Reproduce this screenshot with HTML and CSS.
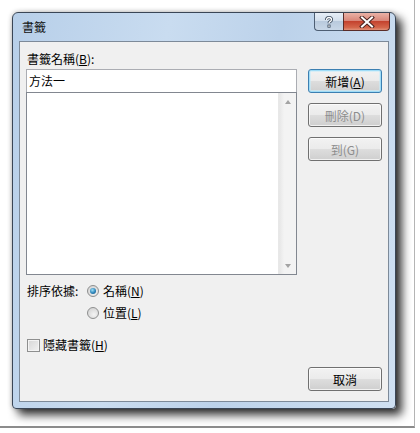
FILE: index.html
```html
<!DOCTYPE html>
<html lang="zh-Hant">
<head>
    <meta charset="UTF-8">
    <meta name="viewport" content="width=device-width, initial-scale=1.0">
    <title>書籤</title>
    <link rel="stylesheet" href="styles.css">
</head>
<body>
    <div class="shot">
        <div class="window">
            <div class="titlebar">
                <span class="title">書籤</span>
                <div class="caption-btns">
                    <div class="cap-btn help">
                        <svg width="12" height="12" viewBox="0 0 12 12">
                            <path d="M3.5 4 Q3.5 1.5 6 1.5 Q8.5 1.5 8.5 3.7 Q8.5 5 6.8 5.8 Q6 6.2 6 7.3" fill="none" stroke="#3b4a5c" stroke-width="3"/>
                            <path d="M3.5 4 Q3.5 1.5 6 1.5 Q8.5 1.5 8.5 3.7 Q8.5 5 6.8 5.8 Q6 6.2 6 7.3" fill="none" stroke="#fff" stroke-width="1.3"/>
                            <rect x="4.5" y="8.6" width="3" height="3" fill="#3b4a5c"/>
                            <rect x="5.3" y="9.4" width="1.4" height="1.4" fill="#fff"/>
                        </svg>
                    </div>
                    <div class="cap-btn close">
                        <svg width="16" height="12" viewBox="0 0 16 12">
                            <path d="M3 1.5 L13 10.5 M13 1.5 L3 10.5" stroke="#4a2420" stroke-width="4" stroke-linecap="square"/>
                            <path d="M3 1.5 L13 10.5 M13 1.5 L3 10.5" stroke="#fff" stroke-width="2" stroke-linecap="square"/>
                        </svg>
                    </div>
                </div>
            </div>

            <div class="client">
                <div class="top">
                    <div class="left">
                        <div class="label">書籤名稱(<u>B</u>):</div>
                        <div class="name-box">方法一</div>
                        <div class="list-box">
                            <div class="scroll">
                                <div class="arrow up"></div>
                                <div class="arrow down"></div>
                            </div>
                        </div>
                    </div>
                    <div class="side">
                        <div class="btn default"><span>新增(<u>A</u>)</span></div>
                        <div class="btn disabled"><span>刪除(D)</span></div>
                        <div class="btn disabled"><span>到(G)</span></div>
                    </div>
                </div>

                <div class="sort">
                    <div class="sort-label">排序依據:</div>
                    <div class="radios">
                        <div class="opt"><span class="radio on"></span><span>名稱(<u>N</u>)</span></div>
                        <div class="opt"><span class="radio"></span><span>位置(<u>L</u>)</span></div>
                    </div>
                </div>

                <div class="opt hide"><span class="check"></span><span>隱藏書籤(<u>H</u>)</span></div>

                <div class="footer">
                    <div class="btn"><span>取消</span></div>
                </div>
            </div>
        </div>
    </div>
</body>
</html>
```

FILE: styles.css
```css
body {
    margin: 0;
    background: #fff;
    font-family: "Noto Sans CJK TC", "Microsoft JhengHei", sans-serif;
    font-size: 12px;
    color: #000;
}
u {
    text-decoration: underline;
    text-underline-offset: 1px;
}

.shot {
    width: 415px;
    height: 428px;
    padding: 12px 0 0 12px;
    box-sizing: border-box;
    border-right: 1px solid #b4b4b4;
    border-bottom: 2px solid #8c8c8c;
}

.window {
    width: 384px;
    height: 397px;
    box-sizing: border-box;
    border: 1px solid #3a4656;
    border-radius: 6px 6px 4px 4px;
    background: linear-gradient(100deg, #b7cfe9 0%, #c9dcf0 35%, #bcd2ea 60%, #cfe0f2 100%);
    box-shadow: 6px 6px 10px rgba(0, 0, 0, 0.8), 0 0 5px rgba(0, 0, 0, 0.25);
    padding: 0 6px 6px 6px;
}

.titlebar {
    height: 28px;
    display: flex;
    align-items: flex-start;
    justify-content: space-between;
}
.title {
    padding-left: 3px;
    line-height: 28px;
    color: #111;
}
.caption-btns {
    display: flex;
    margin-right: -1px;
}
.cap-btn {
    height: 18px;
    box-sizing: border-box;
    border: 1px solid #4d5e73;
    border-top: none;
    display: flex;
    align-items: center;
    justify-content: center;
}
.help {
    width: 29px;
    border-right: none;
    border-radius: 0 0 0 4px;
    background: linear-gradient(#e6eef7, #d3dfec 45%, #b9cadd 50%, #c8d7e7);
}
.close {
    width: 47px;
    border-color: #5a2c28;
    border-radius: 0 0 4px 0;
    background: linear-gradient(#eab2a6, #d9877a 45%, #c4432f 50%, #d4664b 85%, #e0927a);
}

.client {
    width: 370px;
    height: 361px;
    box-sizing: border-box;
    border: 1px solid #7d8a99;
    background: #f0f0f0;
    padding: 9px 6px 0 6px;
    display: flex;
    flex-direction: column;
}

.top {
    display: flex;
    gap: 11px;
}
.left {
    width: 271px;
}
.label {
    line-height: 15px;
    height: 15px;
    padding-left: 1px;
    margin-bottom: 3px;
}
.name-box {
    height: 23px;
    box-sizing: border-box;
    border: 1px solid #abadb3;
    border-bottom: none;
    background: #fff;
    padding-left: 2px;
    line-height: 21px;
}
.list-box {
    height: 183px;
    box-sizing: border-box;
    border: 1px solid #828790;
    background: #fff;
    display: flex;
    justify-content: flex-end;
}
.scroll {
    width: 17px;
    background: linear-gradient(to right, #e6e6e6, #f3f3f3 30%, #f3f3f3);
    border-left: 1px solid #e8e8e8;
    display: flex;
    flex-direction: column;
    justify-content: space-between;
}
.arrow {
    height: 17px;
    display: flex;
    align-items: center;
    justify-content: center;
}
.arrow::before {
    content: "";
    border-left: 3.5px solid transparent;
    border-right: 3.5px solid transparent;
}
.arrow.up::before {
    border-bottom: 4px solid #a3a3a3;
}
.arrow.down::before {
    border-top: 4px solid #a3a3a3;
}

.side {
    display: flex;
    flex-direction: column;
    gap: 10px;
    margin-top: 18px;
}
.btn {
    width: 74px;
    height: 24px;
    box-sizing: border-box;
    border: 1px solid #707070;
    border-radius: 3px;
    background: linear-gradient(#f2f2f2, #ebebeb 48%, #dddddd 52%, #cfcfcf);
    box-shadow: inset 0 0 0 1px rgba(255, 255, 255, 0.7);
    display: flex;
    align-items: center;
    justify-content: center;
}
.btn.default {
    border-color: #3c7fb1;
    box-shadow: inset 0 0 0 1px #9fdcf7, inset 0 0 0 2px rgba(200, 236, 250, 0.6);
}
.btn.disabled {
    color: #8d8d8d;
}

.sort {
    display: flex;
    margin-top: 9px;
}
.sort-label {
    width: 60px;
    padding-left: 1px;
    line-height: 14px;
}
.radios {
    display: flex;
    flex-direction: column;
    gap: 8px;
}
.opt {
    display: flex;
    align-items: center;
    gap: 4px;
    height: 14px;
    line-height: 14px;
}
.radio {
    width: 12px;
    height: 12px;
    box-sizing: border-box;
    border-radius: 50%;
    border: 1px solid #8e8f8f;
    background: radial-gradient(circle at 60% 65%, #f4f4f4, #d8d8d8 70%);
    display: flex;
    align-items: center;
    justify-content: center;
}
.radio.on::before {
    content: "";
    width: 6px;
    height: 6px;
    border-radius: 50%;
    background: radial-gradient(circle at 40% 35%, #9ee0f7, #2b83b9 55%, #1b4f7c);
}

.hide {
    margin-top: 18px;
    padding-left: 1px;
    gap: 3px;
}
.check {
    width: 13px;
    height: 13px;
    box-sizing: border-box;
    border: 1px solid #8e8f8f;
    background: linear-gradient(135deg, #d6d6d6, #f2f2f2);
    box-shadow: inset 0 0 0 1px #f4f4f4;
}

.footer {
    display: flex;
    justify-content: flex-end;
    margin-top: 15px;
}
```
